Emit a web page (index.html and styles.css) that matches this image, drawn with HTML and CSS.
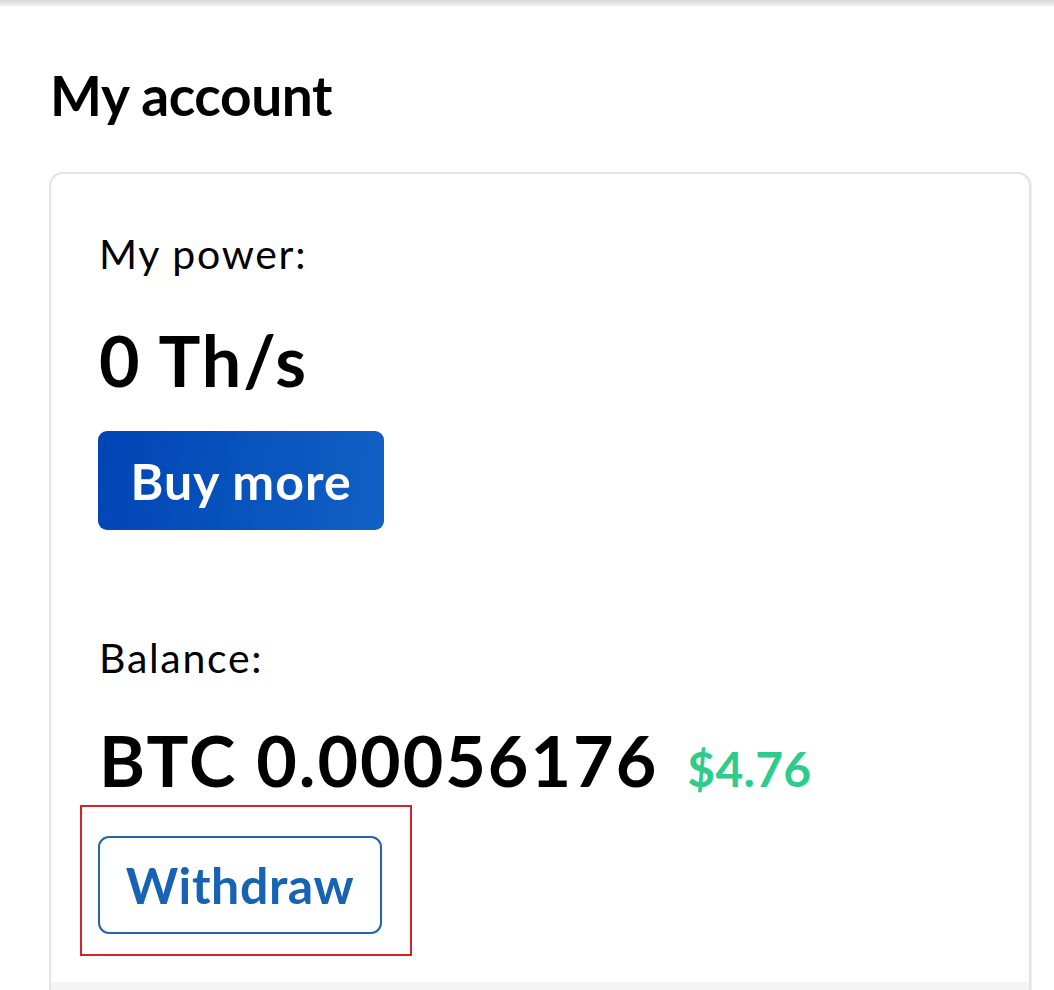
FILE: index.html
```html
<!DOCTYPE html>
<html lang="en">
<head>
<meta charset="utf-8">
<title>My account</title>
<link rel="stylesheet" href="styles.css">
</head>
<body>
<div class="topbar"></div>
<main class="page">
  <h1 class="title">My account</h1>
  <section class="card">
    <div class="block">
      <div class="label">My power:</div>
      <div class="value">0 Th/s</div>
      <button class="btn btn-primary">Buy more</button>
    </div>
    <div class="block block-balance">
      <div class="label">Balance:</div>
      <div class="value">BTC 0.00056176 <span class="usd">$4.76</span></div>
      <div class="withdraw-wrap">
        <button class="btn btn-outline">Withdraw</button>
        <div class="highlight"></div>
      </div>
    </div>
    <div class="card-footer"></div>
  </section>
</main>
</body>
</html>
```
FILE: styles.css
```css
* { box-sizing: border-box; }
html, body { margin: 0; padding: 0; background: #fff; }
body {
  font-family: "Lato", "Noto Sans", sans-serif;
  color: #000;
  height: 990px;
  overflow: hidden;
}
.topbar {
  height: 6px;
  background: linear-gradient(#d9d9d9, #efefef);
}
.page {
  padding: 0 23px 0 49px;
}
.title {
  margin: 56px 0 0 1px;
  font-size: 55px;
  font-weight: 700;
  letter-spacing: -0.4px;
  line-height: 66px;
  height: 66px;
}
.card {
  margin-top: 44px;
  border: 2px solid #e4e4e4;
  border-bottom: none;
  border-radius: 14px 14px 0 0;
  padding: 0 50px 0 50px;
  height: 818px;
  background: #fff;
  position: relative;
  box-shadow: 1px 0 0 #f0f0f0;
}
.block {
  display: flex;
  flex-direction: column;
  align-items: flex-start;
}
.label {
  margin-top: 56px;
  font-size: 41px;
  line-height: 48px;
  font-weight: 400;
  letter-spacing: 1.7px;
  margin-left: -2px;
}
.value {
  margin-top: 46px;
  font-size: 70px;
  font-weight: 700;
  line-height: 72px;
  letter-spacing: 2px;
  margin-left: -2px;
}
.usd {
  color: #2ecc8a;
  font-size: 48px;
  letter-spacing: 0.3px;
  margin-left: 10px;
}
.btn {
  font-family: "Lato", "Noto Sans", sans-serif;
  font-weight: 700;
  border-radius: 9px;
  cursor: pointer;
  margin-left: -3px;
  padding: 0;
}
.btn-primary {
  margin-top: 35px;
  width: 286px;
  height: 99px;
  font-size: 50px;
  letter-spacing: 1px;
  color: #fff;
  border: none;
  background: linear-gradient(100deg, #0045b5 0%, #1160c4 100%);
}
.block-balance .label { margin-top: 104px; }
.block-balance .value { margin-top: 42px; }
.withdraw-wrap {
  position: relative;
  margin-top: 31px;
}
.btn-outline {
  width: 284px;
  height: 98px;
  font-size: 50px;
  letter-spacing: 0.6px;
  color: #1762b3;
  background: #fff;
  border: 2.5px solid #2266aa;
  border-radius: 11px;
}
.highlight {
  position: absolute;
  left: -21px;
  top: -31px;
  width: 332px;
  height: 151px;
  border: 2px solid #d3242b;
  pointer-events: none;
}
.card-footer {
  position: absolute;
  left: 0;
  right: 0;
  bottom: 0;
  height: 8px;
  background: #f4f4f4;
}
```
